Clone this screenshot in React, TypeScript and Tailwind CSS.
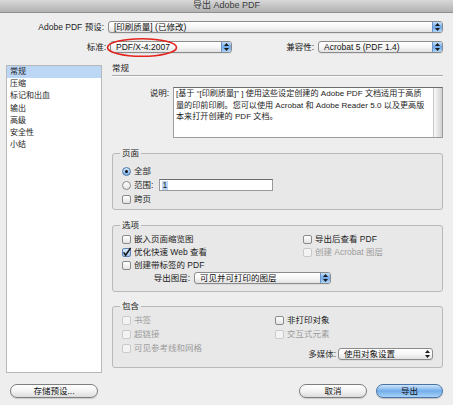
import React from "react";

function Arrows() {
  return (
    <svg width="5" height="8" viewBox="0 0 5 8">
      <path d="M2.5 0 L5 3 L0 3 Z" fill="#1a1a1a" />
      <path d="M0 5 L5 5 L2.5 8 Z" fill="#1a1a1a" />
    </svg>
  );
}

function Popup({ text, w, blue = true }: { text: string; w: string; blue?: boolean }) {
  return (
    <div
      className={`${w} h-[12px] shrink-0 flex items-stretch rounded-[3px] border border-[#8b8b8b] bg-linear-to-b from-white via-[#f7f7f7] to-[#e2e2e2] overflow-hidden shadow-[0_1px_0_rgba(0,0,0,0.06)]`}
    >
      <div className="flex-1 pl-[5px] leading-[10px] text-[#111] whitespace-nowrap overflow-hidden">{text}</div>
      <div
        className={`w-[10px] flex items-center justify-center ${
          blue ? "bg-linear-to-b from-[#c4e0fa] via-[#6ea8e8] to-[#b2d6f7] border-l border-[#6b93c6]" : ""
        }`}
      >
        <Arrows />
      </div>
    </div>
  );
}

function Check({ checked = false, disabled = false }: { checked?: boolean; disabled?: boolean }) {
  return (
    <span
      className={`w-[9px] h-[9px] shrink-0 rounded-[2px] border flex items-center justify-center ${
        disabled
          ? "border-[#cacaca] bg-[#f3f3f3]"
          : checked
          ? "border-[#5d82b3] bg-linear-to-b from-[#dbeafb] to-[#9fc5ee]"
          : "border-[#8a8a8a] bg-linear-to-b from-white to-[#e3e3e3]"
      }`}
    >
      {checked && (
        <svg width="9" height="9" viewBox="0 0 9 9" className="overflow-visible">
          <path d="M1.6 4.4 L3.6 7.2 L8.6 0" stroke="#111" strokeWidth="1.5" fill="none" />
        </svg>
      )}
    </span>
  );
}

function Radio({ on = false }: { on?: boolean }) {
  return (
    <span
      className={`w-[9px] h-[9px] shrink-0 rounded-full border flex items-center justify-center ${
        on ? "border-[#4f77ad] bg-linear-to-b from-[#d2e6fb] to-[#78b0ea]" : "border-[#8a8a8a] bg-linear-to-b from-white to-[#e3e3e3]"
      }`}
    >
      {on && <span className="w-[3px] h-[3px] rounded-full bg-[#111]" />}
    </span>
  );
}

function CheckRow({ label, checked, disabled }: { label: string; checked?: boolean; disabled?: boolean }) {
  return (
    <div className="h-[12px] flex items-center gap-[3px]">
      <Check checked={checked} disabled={disabled} />
      <span className={`leading-[12px] whitespace-nowrap ${disabled ? "text-[#9c9c9c]" : "text-[#1c1c1c]"}`}>{label}</span>
    </div>
  );
}

function Group({ title, children, className }: { title: string; children: React.ReactNode; className: string }) {
  return (
    <fieldset className={`${className} border border-[#b9b9b9] rounded-[3px] bg-[#e8e8e8]`}>
      <legend className="ml-[7px] px-[2px] leading-[10px] text-[#1c1c1c]">{title}</legend>
      {children}
    </fieldset>
  );
}

export default function App() {
  const list = ["常规", "压缩", "标记和出血", "输出", "高级", "安全性", "小结"];
  return (
    <div className="relative w-[453px] h-[405px] overflow-hidden bg-[#eeeeee] text-[8.5px] text-[#1c1c1c] font-['Liberation_Sans','Noto_Sans_CJK_SC',sans-serif] flex flex-col">
      {/* title bar */}
      <div className="h-[13px] shrink-0 bg-linear-to-b from-[#d8d8d8] to-[#b2b2b2] border-b border-[#8f8f8f] flex items-center justify-center text-[9px] text-[#3a3a3a]">
        导出 Adobe PDF
      </div>

      {/* preset row */}
      <div className="mt-[8px] h-[12px] flex items-center">
        <div className="w-[106px] pr-[2px] text-right leading-[12px]">Adobe PDF 预设:</div>
        <div className="ml-[2px]">
          <Popup w="w-[335px]" text="[印刷质量] (已修改)" />
        </div>
      </div>

      {/* standard row */}
      <div className="mt-[8px] h-[12px] flex items-center">
        <div className="w-[107px] pr-[1px] text-right leading-[12px]">标准:</div>
        <div className="ml-[3px]">
          <Popup w="w-[122px]" text="PDF/X-4:2007" />
        </div>
        <div className="w-[84px] pr-[2px] text-right leading-[12px]">兼容性:</div>
        <div className="ml-[2px]">
          <Popup w="w-[125px]" text="Acrobat 5 (PDF 1.4)" />
        </div>
      </div>

      {/* main */}
      <div className="mt-[12px] flex pl-[6px]">
        <div className="w-[96px] h-[308px] shrink-0 border border-[#b8b8b8] bg-white flex flex-col text-[8px]">
          {list.map((t, i) => (
            <div
              key={t}
              className={`h-[12.2px] leading-[12.2px] pl-[3px] ${i === 0 ? "bg-[#bcd6f6]" : ""}`}
            >
              {t}
            </div>
          ))}
        </div>

        <div className="w-[331px] ml-[10px] flex flex-col">
          <div className="h-[9px] leading-[9px] -mt-[1px]">常规</div>
          <div className="mt-[2px] h-[2px] border-t border-[#a9a9a9] bg-[#fbfbfb]" />

          <div className="mt-[10px] flex">
            <div className="w-[57px] text-right leading-[11.5px] pt-[1px]">说明:</div>
            <div className="ml-[4px] w-[270px] h-[51px] flex border border-[#9c9c9c] border-t-[#6c6c6c] bg-white">
              <div className="flex-1 pl-[2px] leading-[11.5px] text-[8.1px] whitespace-nowrap overflow-hidden text-[#1c1c1c]">
                [基于 “[印刷质量]” ] 使用这些设定创建的 Adobe PDF 文档适用于高质
                <br />
                量的印前印刷。您可以使用 Acrobat 和 Adobe Reader 5.0 以及更高版
                <br />
                本来打开创建的 PDF 文档。
              </div>
              <div className="w-[9px] shrink-0 bg-linear-to-r from-[#f8f8f8] via-[#e6e6e6] to-[#d0d0d0] border-l border-[#c8c8c8]" />
            </div>
          </div>

          <Group title="页面" className="mt-[10px]">
            <div className="pt-[7px] pb-[4px] pl-[9px] flex flex-col gap-[2px]">
              <div className="h-[12px] flex items-center gap-[3px]">
                <Radio on />
                <span className="leading-[12px]">全部</span>
              </div>
              <div className="h-[12px] flex items-center">
                <Radio />
                <span className="ml-[3px] w-[25px] leading-[12px]">范围:</span>
                <div className="w-[114px] h-[12px] border border-[#999] border-t-[#6c6c6c] bg-white flex items-center pl-[2px]">
                  <span className="bg-[#bcd6f6] leading-[9px] px-[0.5px]">1</span>
                </div>
              </div>
              <CheckRow label="跨页" />
            </div>
          </Group>

          <Group title="选项" className="mt-[10px]">
            <div className="pt-[3px] pb-[7px] pl-[9px] flex flex-col gap-[1px]">
              <div className="flex">
                <div className="w-[181px]">
                  <CheckRow label="嵌入页面缩览图" />
                </div>
                <CheckRow label="导出后查看 PDF" />
              </div>
              <div className="flex">
                <div className="w-[181px]">
                  <CheckRow label="优化快速 Web 查看" checked />
                </div>
                <CheckRow label="创建 Acrobat 图层" disabled />
              </div>
              <CheckRow label="创建带标签的 PDF" />
              <div className="h-[12px] flex items-center">
                <div className="w-[70px] pr-[2px] text-right leading-[12px]">导出图层:</div>
                <div className="ml-[2px]">
                  <Popup w="w-[137px]" text="可见并可打印的图层" />
                </div>
              </div>
            </div>
          </Group>

          <Group title="包含" className="mt-[9px]">
            <div className="pt-[3px] pb-[7px] pl-[9px] flex">
              <div className="w-[153px] flex flex-col gap-[2px]">
                <CheckRow label="书签" disabled />
                <CheckRow label="超链接" disabled />
                <CheckRow label="可见参考线和网格" disabled />
              </div>
              <div className="flex-1 flex flex-col gap-[2px]">
                <CheckRow label="非打印对象" />
                <CheckRow label="交互式元素" disabled />
                <div className="mt-[6px] flex items-center justify-end pr-[9px]">
                  <span className="leading-[11px] text-[#333]">多媒体:</span>
                  <div className="ml-[2px]">
                    <Popup w="w-[95px]" text="使用对象设置" blue={false} />
                  </div>
                </div>
              </div>
            </div>
          </Group>
        </div>
      </div>

      {/* buttons */}
      <div className="mt-[11px] flex items-center justify-between px-[10px]">
        <button className="w-[88px] h-[14px] rounded-full border border-[#7e7e7e] bg-linear-to-b from-white via-[#f3f3f3] to-[#dcdcdc] leading-[12px] text-[8.5px] text-[#111] shadow-[0_1px_1px_rgba(0,0,0,0.15)]">
          存储预设...
        </button>
        <div className="flex gap-[9px]">
          <button className="w-[68px] h-[14px] rounded-full border border-[#7e7e7e] bg-linear-to-b from-white via-[#f3f3f3] to-[#dcdcdc] leading-[12px] text-[8.5px] text-[#111] shadow-[0_1px_1px_rgba(0,0,0,0.15)]">
            取消
          </button>
          <button className="w-[67px] h-[14px] rounded-full border border-[#4a73a8] bg-linear-to-b from-[#cfe6fb] via-[#71adea] to-[#a9d3f8] leading-[12px] text-[8.5px] text-[#111] shadow-[0_1px_1px_rgba(0,0,0,0.2)]">
            导出
          </button>
        </div>
      </div>

      {/* red annotation ellipse */}
      <svg className="absolute left-[106px] top-[37px] pointer-events-none" width="72" height="21" viewBox="0 0 72 21">
        <ellipse cx="36" cy="10.5" rx="34.5" ry="8.8" fill="none" stroke="#e3231c" strokeWidth="1.6" />
      </svg>
    </div>
  );
}
